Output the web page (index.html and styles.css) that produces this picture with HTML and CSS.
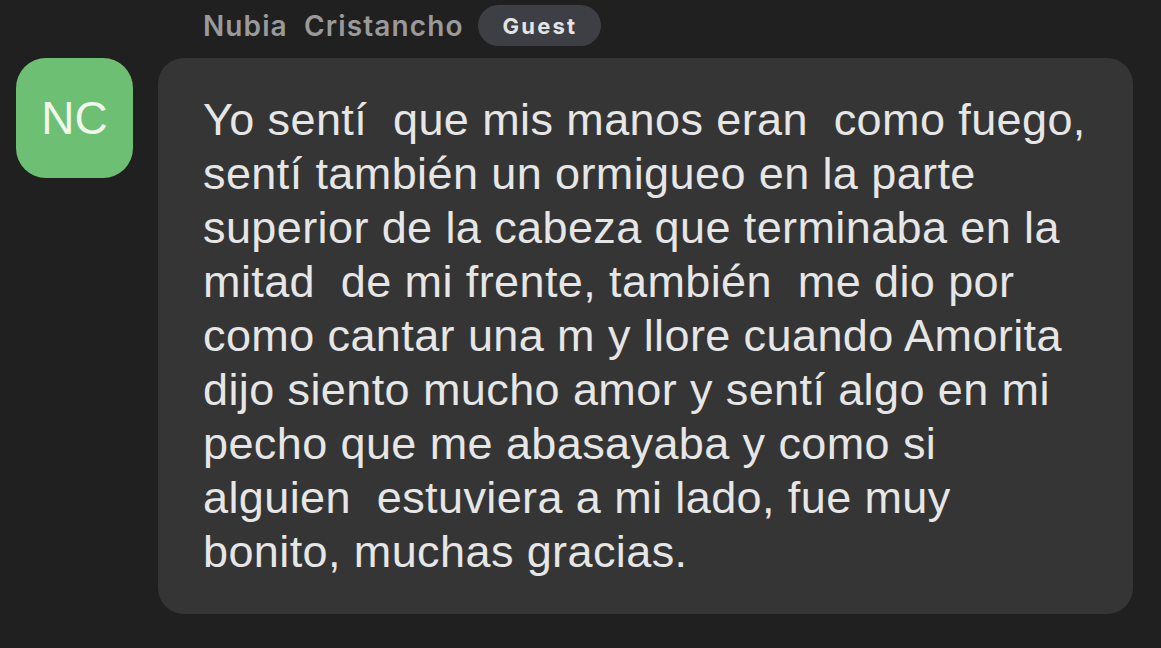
FILE: index.html
```html
<!DOCTYPE html>
<html lang="es">
<head>
<meta charset="utf-8">
<link rel="stylesheet" href="styles.css">
</head>
<body>
<div class="chat">
  <div class="header">
    <span class="name">Nubia&nbsp; Cristancho</span>
    <span class="badge">Guest</span>
  </div>
  <div class="row">
    <div class="avatar">NC</div>
    <div class="bubble">
      <span class="line">Yo sentí&nbsp; que mis manos eran&nbsp; como fuego,</span>
      <span class="line">sentí también un ormigueo en la parte</span>
      <span class="line">superior de la cabeza que terminaba en la</span>
      <span class="line">mitad&nbsp; de mi frente, también&nbsp; me dio por</span>
      <span class="line">como cantar una m y llore cuando Amorita</span>
      <span class="line">dijo siento mucho amor y sentí algo en mi</span>
      <span class="line">pecho que me abasayaba y como si</span>
      <span class="line">alguien&nbsp; estuviera a mi lado, fue muy</span>
      <span class="line">bonito, muchas gracias.</span>
    </div>
  </div>
</div>
</body>
</html>
```

FILE: styles.css
```css
html, body {
  margin: 0;
  padding: 0;
  background: #202020;
  width: 1161px;
  height: 648px;
  overflow: hidden;
}
body {
  font-family: "Liberation Sans", Arial, sans-serif;
}
.chat {
  padding: 5px 28px 0 16px;
}
.header {
  display: flex;
  align-items: center;
  gap: 14px;
  padding-left: 187px;
  height: 41px;
}
.name {
  font-family: Inter, "Liberation Sans", sans-serif;
  color: #9a9a9a;
  font-size: 28px;
  font-weight: 600;
  letter-spacing: 1.1px;
  padding-top: 1px;
}
.badge {
  font-family: Inter, "Liberation Sans", sans-serif;
  background: #3d3f45;
  color: #e4e4e4;
  font-weight: 700;
  font-size: 22px;
  height: 41px;
  line-height: 42px;
  padding: 0 24px 0 25px;
  border-radius: 21px;
  letter-spacing: 2.2px;
}
.row {
  display: flex;
  align-items: flex-start;
  gap: 25px;
  margin-top: 12px;
}
.avatar {
  width: 117px;
  height: 120px;
  border-radius: 30px;
  background: #6dbf73;
  color: #f0f7ea;
  font-size: 46px;
  display: flex;
  align-items: center;
  justify-content: center;
  flex-shrink: 0;
}
.bubble {
  width: 975px;
  box-sizing: border-box;
  height: 556px;
  background: #353535;
  border-radius: 26px;
  padding: 35px 20px 0 45px;
  color: #e6e6e6;
  font-size: 45px;
  line-height: 54px;
  letter-spacing: 0.4px;
}
.line {
  display: block;
  white-space: nowrap;
}
```
